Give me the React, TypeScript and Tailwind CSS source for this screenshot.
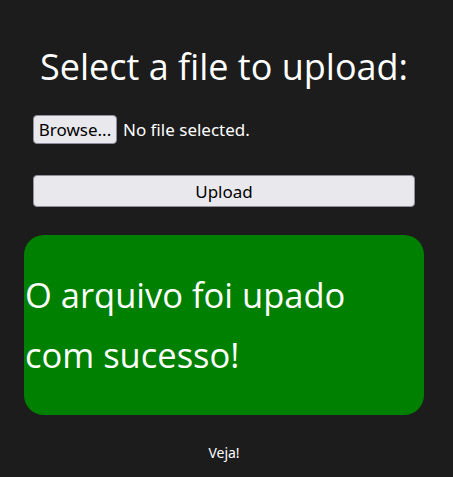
export default function App() {
  return (
    <div className="min-h-[477px] w-full bg-[#1c1c1c] text-white" style={{ fontFamily: '"Noto Sans", sans-serif' }}>
      <div className="ml-[24px] w-[400px] pt-[44px]">
        <h1 className="text-center text-[36px] leading-[46px] text-white" style={{ fontFamily: '"Open Sans", sans-serif' }}>
          Select a file to upload:
        </h1>
        <div className="px-[9px] pt-[25px]">
          <div className="flex items-center">
            <button className="h-[29px] w-[84px] rounded-[4px] border border-[#8f8f9d] bg-[#e9e9ed] text-[17px] text-black leading-none">
              Browse...
            </button>
            <span className="ml-[6px] text-[17px] text-white">No file selected.</span>
          </div>
          <button className="mt-[31px] h-[32px] w-full rounded-[4px] border border-[#8f8f9d] bg-[#e9e9ed] text-[17px] text-black leading-none">
            Upload
          </button>
        </div>
        <div className="mt-[28px] flex h-[180px] items-center rounded-[20px] bg-[#008000] pl-[1px]">
          <p className="text-[34.5px] leading-[60px] text-white" style={{ fontFamily: '"Open Sans", sans-serif' }}>
            O arquivo foi upado
            <br />
            com sucesso!
          </p>
        </div>
        <p className="mt-[27px] text-center text-[14px] text-white">Veja!</p>
      </div>
    </div>
  );
}
